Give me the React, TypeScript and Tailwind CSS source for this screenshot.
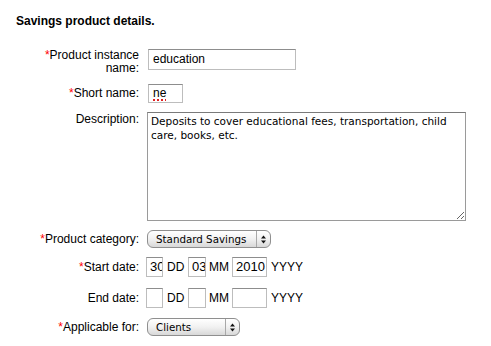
const req = <span className="text-[#ff0000]">*</span>

function Label({ children, className = '' }: { children: React.ReactNode; className?: string }) {
  return (
    <div className={`w-[104px] shrink-0 text-right leading-[13px] ${className}`}>{children}</div>
  )
}

function Field({ value, className = '' }: { value: string; className?: string }) {
  return (
    <div
      className={`h-[20px] shrink-0 overflow-hidden whitespace-nowrap border border-[#bdbdbd] border-t-[#8d8d8d] bg-white pl-[3px] text-[13px] leading-[18px] ${className}`}
    >
      {value}
    </div>
  )
}

function Arrows() {
  return (
    <svg width="7" height="9" viewBox="0 0 7 9">
      <path d="M3.5 0.5 L6 3.5 L1 3.5 Z" fill="#111" />
      <path d="M3.5 8.5 L6 5.5 L1 5.5 Z" fill="#111" />
    </svg>
  )
}

function Select({ value, width }: { value: string; width: string }) {
  return (
    <div
      className={`${width} flex h-[18px] shrink-0 items-stretch rounded-[6px] border border-[#8f8f8f] bg-gradient-to-b from-[#ffffff] via-[#f1f1f1] to-[#d8d8d8] font-['DejaVu_Sans',sans-serif] text-[10.3px] leading-[16px]`}
    >
      <div className="flex-1 overflow-hidden whitespace-nowrap pl-[8px]">{value}</div>
      <div className="flex w-[14px] items-center justify-center border-l border-[#a8a8a8]">
        <Arrows />
      </div>
    </div>
  )
}

function DateRow({ d, m, y }: { d: string; m: string; y: string }) {
  return (
    <div className="ml-[7px] flex items-center">
      <Field value={d} className="w-[17px]" />
      <span className="ml-[4px] w-[17px]">DD</span>
      <Field value={m} className="ml-[4px] w-[18px]" />
      <span className="ml-[3px] w-[20px]">MM</span>
      <Field value={y} className="ml-[3px] w-[35px]" />
      <span className="ml-[4px]">YYYY</span>
    </div>
  )
}

export default function App() {
  return (
    <div className="h-[346px] w-[491px] bg-white font-['Liberation_Sans',Arial,sans-serif] text-[12px] text-black">
      <div className="pl-[16px] pt-[14px] text-[12px] font-bold leading-[14px]">Savings product details.</div>

      <div className="pl-[35px]">
        <div className="mt-[21px] flex items-start">
          <Label>{req}Product instance name:</Label>
          <div className="ml-[9px] h-[21px] w-[148px] overflow-hidden whitespace-nowrap border border-[#bdbdbd] border-t-[#8d8d8d] bg-white pl-[4px] leading-[19px]">
            education
          </div>
        </div>

        <div className="mt-[9px] flex items-center">
          <Label>{req}Short name:</Label>
          <div className="ml-[9px] h-[19px] w-[35px] overflow-hidden whitespace-nowrap border border-[#bdbdbd] border-t-[#8d8d8d] bg-white pl-[4px] leading-[17px]">
            <span className="underline decoration-[#e02020] decoration-dotted decoration-2 underline-offset-[2px]">ne</span>
          </div>
        </div>

        <div className="mt-[9px] flex items-start">
          <Label className="pt-[1px]">Description:</Label>
          <textarea
            readOnly
            defaultValue="Deposits to cover educational fees, transportation, child care, books, etc."
            className="ml-[8px] h-[109px] w-[319px] border border-[#9a9a9a] border-t-[#7a7a7a] bg-white px-[3px] py-[1px] font-['DejaVu_Sans',sans-serif] text-[10.5px] leading-[14px] text-black outline-none"
          />
        </div>

        <div className="mt-[9px] flex items-center">
          <Label>{req}Product category:</Label>
          <div className="ml-[8px]">
            <Select value="Standard Savings" width="w-[124px]" />
          </div>
        </div>

        <div className="mt-[9px] flex items-center">
          <Label>{req}Start date:</Label>
          <DateRow d="30" m="03" y="2010" />
        </div>

        <div className="mt-[11px] flex items-center">
          <Label>End date:</Label>
          <DateRow d="" m="" y="" />
        </div>

        <div className="mt-[10px] flex items-center">
          <Label>{req}Applicable for:</Label>
          <div className="ml-[8px]">
            <Select value="Clients" width="w-[93px]" />
          </div>
        </div>
      </div>
    </div>
  )
}
